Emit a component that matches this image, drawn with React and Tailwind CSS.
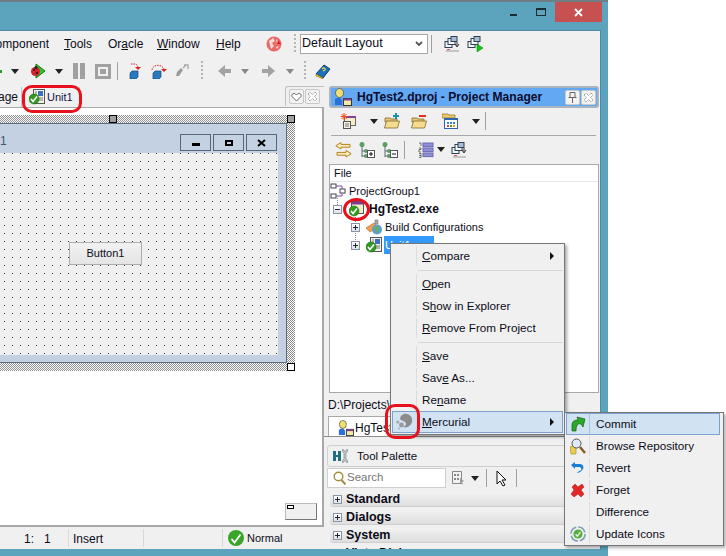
import React from "react";

const Check = ({ x = 0, y = 6, r = 5 }) => (
  <g>
    <circle cx={x + r} cy={y + r} r={r} fill="#2f9a1e" stroke="#1c6f14" strokeWidth="0.6" />
    <path d={`M${x + r - 3} ${y + r} l2 2.4 l4 -5`} fill="none" stroke="#fff" strokeWidth="1.6" />
  </g>
);

const Svg = ({ children, w = 16, h = 16, vb, className = "" }) => (
  <svg width={w} height={h} viewBox={vb || `0 0 ${w} ${h}`} className={`shrink-0 ${className}`}>{children}</svg>
);

const DD = ({ c = "#222", className = "" }) => (
  <Svg w={8} h={5} className={className}><path d="M0 0h8L4 5z" fill={c} /></Svg>
);

const Grip = ({ className = "" }) => (
  <div className={`w-[2px] h-[20px] shrink-0 bg-[repeating-linear-gradient(#b5b5b5_0_2px,transparent_2px_4px)] ${className}`} />
);

const VSep = ({ className = "" }) => <div className={`w-px h-[18px] shrink-0 bg-[#a0a0a0] ${className}`} />;

const UnitIcon = () => (
  <Svg>
    <rect x="4.5" y="0.5" width="11" height="14" fill="#f4f1e6" stroke="#555" />
    <rect x="9" y="2" width="5" height="5" fill="#3d6fc0" />
    <path d="M9 9h5M9 11h5M6 3h2M6 5h2" stroke="#777" />
    <Check x={0} y={5} />
  </Svg>
);

const ExeIcon = () => (
  <Svg>
    <rect x="2.5" y="0.5" width="12" height="12" fill="#f5ecc8" stroke="#555" />
    <rect x="2.5" y="0.5" width="12" height="3" fill="#7a3d90" />
    <Check x={0} y={5} />
  </Svg>
);

const Bug = () => (
  <Svg>
    <path d="M6 1l9 7-9 7z" fill="#2cc52c" stroke="#157a15" />
    <ellipse cx="5.5" cy="8.5" rx="4.5" ry="4.5" fill="#d6202a" />
    <circle cx="4" cy="7" r="1" fill="#111" /><circle cx="7" cy="10" r="1" fill="#111" /><circle cx="6" cy="4.5" r="1.6" fill="#222" />
  </Svg>
);

const Globe = () => (
  <Svg>
    <circle cx="8" cy="8" r="7.5" fill="#ea6a6a" />
    <path d="M3 5l4-3 2 3-3 2 2 3-3 3zM10 3l4 4-3 1zM10 11l3-1-2 3z" fill="#fbdada" />
    <path d="M12 4l3 4-4 0z" fill="#d62020" />
  </Svg>
);

const Cube = ({ x = 4, y = 7 }) => (
  <g>
    <path d={`M${x} ${y + 2}l2 -2h6v6l-2 2h-6z`} fill="#2a78bd" stroke="#164b80" strokeWidth="0.7" />
  </g>
);

const StepA = () => (
  <Svg>
    <path d="M3 1h3c3 0 4 2 4 4" fill="none" stroke="#e02020" strokeDasharray="1.5 1" />
    <path d="M7 4h6l-3 3z" fill="#e02020" />
    <Cube x={2} y={8} />
  </Svg>
);

const StepB = () => (
  <Svg>
    <path d="M1 7c0-5 9-7 12-1" fill="none" stroke="#e02020" strokeDasharray="1.5 1" />
    <path d="M10 6h6l-3 3z" fill="#e02020" />
    <Cube x={2} y={8} />
  </Svg>
);

const StepC = () => (
  <Svg>
    <path d="M3 9l4-4 2 2-4 6h-3z" fill="#9c9c9c" />
    <path d="M9 5l3-3M10 2h4v4" fill="none" stroke="#aaa" strokeWidth="1.4" />
  </Svg>
);

const Book = () => (
  <Svg>
    <path d="M1 11L9 2l6 4-7 9z" fill="#1b6fb8" stroke="#0d3c70" />
    <path d="M1 11l7 4 0 1-7-3z" fill="#f0c820" stroke="#7a6a10" strokeWidth="0.5" />
    <path d="M7 6c1-2 4-1 3 1l-2 1" fill="none" stroke="#f0e040" strokeWidth="1.1" />
  </Svg>
);

const Stack = ({ play }) => (
  <Svg>
    <rect x="1" y="5.5" width="7" height="6" fill="#eef3f8" stroke="#2f4050" />
    <rect x="4" y="2.5" width="7" height="6" fill="#f4f7fb" stroke="#2f4050" />
    <rect x="7" y="0.5" width="6" height="5" fill="#a4bdd6" stroke="#2f4050" />
    {play ? <path d="M10 8l6 4-6 4z" fill="#11c811" stroke="#0a7a0a" strokeWidth="0.5" /> : <>
      <path d="M13 6v4M11 8l2 3 2-3" fill="none" stroke="#333" />
      <path d="M2 14h13v2H2z" fill="#c4c4c4" /><path d="M3 13h3v1H3z" fill="#e05050" />
    </>}
  </Svg>
);

const NewItem = () => (
  <Svg>
    <rect x="4.5" y="3.5" width="11" height="9" fill="#f5ecc8" stroke="#666" />
    <rect x="6" y="3" width="9" height="2" fill="#80409a" />
    <rect x="3.5" y="8.5" width="7" height="7" fill="#f4f1e6" stroke="#555" />
    <path d="M5 11h4M5 13h4" stroke="#777" />
    <path d="M4 0v7M0.5 3.5h7M1.5 1l5 5M6.5 1l-5 5" stroke="#f04a10" />
  </Svg>
);

const Folder = ({ add, red }) => (
  <Svg>
    <path d="M1 5h5l1 1h6v3H1z" fill="#e8c670" stroke="#7d6a30" strokeWidth="0.8" />
    <path d="M0.5 15l2-7h13l-2 7z" fill="#f6dc8c" stroke="#7d6a30" strokeWidth="0.8" />
    {add && <path d="M12 0v6M9 3h6" stroke="#1a8fb0" strokeWidth="2" />}
    {red && <path d="M8 2h7v2H8z" fill="#e03020" />}
  </Svg>
);

const Cal = () => (
  <Svg>
    <path d="M0 1h6l1 1h6v3H0z" fill="#edc86a" stroke="#87702a" strokeWidth="0.7" />
    <rect x="2.5" y="5.5" width="13" height="10" fill="#fff" stroke="#2b66b0" />
    <rect x="3" y="5" width="12" height="2" fill="#2b66b0" />
    <path d="M5 9h2v2H5zM8 9h2v2H8zM11 9h2v2h-2z" fill="#3a7fd0" />
    <path d="M5 12h2v2H5z" fill="#d04040" /><path d="M8 12h2v2H8z" fill="#40a040" /><path d="M11 12h2v2h-2z" fill="#e0a020" />
  </Svg>
);

const SwapArrows = () => (
  <Svg w={17} h={16}>
    <path d="M6 .5L.8 3.8 6 7V5.2h9V2.4H6zM11 8.5l5.2 3.2L11 15v-1.8H2v-2.8h9z" fill="#fbeebc" stroke="#b8801c" />
  </Svg>
);

const TreeBtn = ({ plus }) => (
  <Svg>
    <circle cx="3" cy="2.5" r="2.5" fill="#5aa060" />
    <circle cx="7" cy="9" r="2" fill="#5aa060" />
    <circle cx="7" cy="14" r="2" fill="#5aa060" />
    <path d="M3 4v11M3 9h3M3 14h3" stroke="#667" fill="none" />
    <rect x="8.5" y="8.5" width="7" height="7" fill="#fff" stroke="#555" />
    <path d="M10 12h4" stroke="#111" />
    {plus && <path d="M12 10v4" stroke="#111" />}
  </Svg>
);

const ListNum = () => (
  <Svg>
    <path d="M1 1h2v3M1 6h2v1.5H1V10h2M1 11.5h2v4H1M1 13.5h2" fill="none" stroke="#555" strokeWidth="0.8" />
    <rect x="5" y="1" width="10" height="3.6" fill="#8f8fd8" stroke="#6a6ab0" />
    <rect x="5" y="6" width="10" height="3.6" fill="#8f8fd8" stroke="#6a6ab0" />
    <rect x="5" y="11" width="10" height="3.6" fill="#8f8fd8" stroke="#6a6ab0" />
  </Svg>
);

const GroupIcon = () => (
  <Svg>
    <rect x="1" y="1" width="5" height="4" fill="#fff" stroke="#445" />
    <rect x="10" y="6" width="5" height="4" fill="#fff" stroke="#445" />
    <rect x="1" y="11" width="5" height="4" fill="#fff" stroke="#445" />
    <path d="M6 3h6v3M6 13h6v-3" fill="none" stroke="#7a4a9a" />
  </Svg>
);

const BuildIcon = () => (
  <Svg>
    <path d="M0 9l8-5 3 4-7 5z" fill="#f0a050" stroke="#b06020" strokeWidth="0.6" />
    <circle cx="11" cy="10.5" r="5" fill="#5a9fd0" />
    <path d="M8 8l4-1 1 4-3 3z" fill="#64b060" />
    <path d="M9 1h3v4H9z" fill="#aaa" stroke="#777" strokeWidth="0.6" />
  </Svg>
);

const PersonIcon = ({ size = 18 }) => (
  <Svg w={size} h={size} vb="0 0 18 18">
    <path d="M1 17v-6l4-2 3 3v5z" fill="#2a70d8" />
    <ellipse cx="5.5" cy="5" rx="4" ry="4.5" fill="#f0e070" stroke="#555" strokeWidth="0.8" />
    <rect x="9.5" y="10.5" width="8" height="7" fill="#f5e8a0" stroke="#333" />
    <rect x="9.5" y="10.5" width="8" height="2" fill="#7a3d90" />
  </Svg>
);

const Expander = ({ minus }) => (
  <div className="w-[9px] h-[9px] shrink-0 border border-[#8a96a8] bg-[linear-gradient(#fff,#dde0e6)] flex items-center justify-center relative">
    <div className="w-[5px] h-px bg-[#223]" />
    {!minus && <div className="absolute w-px h-[5px] bg-[#223]" />}
  </div>
);

const Hg = () => (
  <Svg w={18} h={18}>
    <path d="M8 1c5-1 9 3 8 8-1 4-5 6-9 5 3-1 4-3 2-5S5 8 4 6c0-3 2-4 4-5z" fill="#8b8b8b" />
    <circle cx="5.5" cy="12" r="2.4" fill="#9b9b9b" />
    <circle cx="1.8" cy="9" r="1.5" fill="#a8a8a8" />
    <circle cx="3" cy="15.5" r="0.9" fill="#aaa" />
  </Svg>
);

const CommitI = () => (
  <Svg>
    <path d="M2 15V9c0-4 3-5 6-5L7 1l8 2-2 8-2-3C8 7 6 9 6 15z" fill="#2ba82b" stroke="#126012" strokeWidth="0.7" />
  </Svg>
);
const BrowseI = () => (
  <Svg w={16} h={17}>
    <path d="M0 9l3-1h3v8H1z" fill="#f0cc50" stroke="#9a8020" strokeWidth="0.6" />
    <circle cx="6.5" cy="5.5" r="4.5" fill="#dfeafa" stroke="#555" />
    <path d="M10 9l5 6" stroke="#8a5a20" strokeWidth="2.4" />
  </Svg>
);
const RevertI = () => (
  <Svg>
    <path d="M1 5l4-3v2h5c3 0 4 3 3 5s-4 4-6 4l2-2c2 0 3-2 2-3s-1-1-2-1H5v2z" fill="#1b7fd6" />
  </Svg>
);
const ForgetI = () => (
  <Svg>
    <path d="M2 5l3-3 3 3 4-3 2 3-3 3 3 4-3 3-3-3-4 3-3-3 3-4z" fill="#e02828" stroke="#b01010" strokeWidth="0.5" />
  </Svg>
);
const UpdateI = () => (
  <Svg>
    <circle cx="8" cy="8" r="7" fill="none" stroke="#7aa0b0" strokeWidth="1.6" strokeDasharray="9 2" />
    <circle cx="8" cy="8" r="4.6" fill="#58ad45" />
    <path d="M5.6 8.2l1.8 2 3-4" fill="none" stroke="#e6f5e0" strokeWidth="1.3" />
  </Svg>
);

const MenuRow = ({ children, arrow, hot, icon }) => (
  <div className={`h-[22px] flex items-center border ${hot ? "bg-[#d1e2f2] border-[#7da2ce]" : "border-transparent"}`}>
    <div className="w-[24px] h-full shrink-0 border-r border-[#dcdcdc] flex items-center justify-center">{icon}</div>
    <span className="ml-[5px] flex-1 whitespace-nowrap">{children}</span>
    {arrow && <div className="mr-[8px] w-0 h-0 border-y-[4px] border-y-transparent border-l-[4px] border-l-[#111]" />}
  </div>
);

const MenuSep = () => (
  <div className="h-[6px] flex items-center pl-[26px]"><div className="h-px w-full bg-[#d4d4d4]" /></div>
);

const SubRow = ({ children, hot, icon }) => (
  <div className={`h-[22px] flex items-center border ${hot ? "bg-[#d1e2f2] border-[#7da2ce]" : "border-transparent"}`}>
    <div className={`w-[23px] h-full shrink-0 border-r flex items-center justify-center ${hot ? "border-[#a9c3df]" : "border-[#dcdcdc]"}`}>{icon}</div>
    <span className="ml-[6px] whitespace-nowrap">{children}</span>
  </div>
);

const Category = ({ children }) => (
  <div className="h-[15px] mb-[3px] ml-[6px] rounded-[3px] border-b border-[#cfcfcf] bg-[linear-gradient(#f2f2f2,#dedede)] flex items-center pl-[3px] font-bold text-[12.5px]">
    <Expander />
    <span className="ml-[4px]">{children}</span>
  </div>
);

const TitleBtn = ({ children }) => (
  <div className="w-[15px] h-[15px] rounded-[2px] border border-[#c8c8c8] bg-[#f2f2f2] flex items-center justify-center shrink-0">{children}</div>
);

const PinGlyph = () => (
  <Svg w={9} h={11}><path d="M2 .5h5v5H2zM.5 5.5h8M4.5 6v5" fill="none" stroke="#666" /></Svg>
);
const CloseGlyph = () => (
  <Svg w={11} h={11}><path d="M1 3l2-2 2.5 2.5L8 1l2 2-2.5 2.5L10 8l-2 2-2.5-2.5L3 10 1 8l2.5-2.5z" fill="#fff" stroke="#888" strokeWidth="0.8" strokeDasharray="1.4 .6" /></Svg>
);
const HeartGlyph = () => (
  <Svg w={11} h={10}><path d="M5.5 9L1 4.5C0 2 3.5 0 5.5 3 7.5 0 11 2 10 4.5z" fill="#fff" stroke="#666" /></Svg>
);

const FormBtn = ({ children }) => (
  <div className="w-[31px] h-[17px] border border-[#56677c] bg-[#c3d1e2] flex items-center justify-center">{children}</div>
);

const Handle = ({ className }) => <div className={`absolute w-[8px] h-[8px] border border-black ${className}`} />;

export default function App() {
  return (
    <div className="relative w-[726px] h-[556px] bg-white overflow-hidden font-['Liberation_Sans',sans-serif] text-[12px] text-[#0c0c18]">
      <div className="w-[608px] h-[556px] bg-[#5ca3bd] border-t-2 border-[#6f7d85] flex flex-col">
        {/* caption */}
        <div className="h-[28px] shrink-0 flex items-start justify-end pr-[6px]">
          <div className="w-[7px] h-[2px] bg-[#1c2c34] mt-[12px] mr-[19px]" />
          <div className="w-[10px] h-[8px] border border-t-2 border-[#1c2c34] mt-[6px] mr-[9px]" />
          <div className="w-[47px] h-[20px] bg-[#c75050] flex items-center justify-center">
            <Svg w={9} h={9}><path d="M1 1l7 7M8 1L1 8" stroke="#fff" strokeWidth="1.8" /></Svg>
          </div>
        </div>

        {/* client */}
        <div className="w-[601px] h-[519px] shrink-0 bg-[#f0f0f0] border-t border-r border-[#4d8aa3] flex flex-col overflow-hidden">
          {/* menu row */}
          <div className="h-[25px] shrink-0 flex items-center">
            <div className="w-[64px] shrink-0 pt-px"><div className="w-[49px] flex justify-end overflow-hidden whitespace-nowrap"><span className="shrink-0">Component</span></div></div>
            <span className="w-[44px] shrink-0 pt-px"><u>T</u>ools</span>
            <span className="w-[49px] shrink-0 pt-px">Or<u>a</u>cle</span>
            <span className="w-[59px] shrink-0 pt-px"><u>W</u>indow</span>
            <span className="w-[50px] shrink-0 pt-px"><u>H</u>elp</span>
            <Globe />
            <Grip className="ml-[12px]" />
            <div className="ml-[4px] w-[128px] h-[20px] shrink-0 bg-white border border-[#a8a8a8] flex items-center pl-[1px]">
              <span className="flex-1 text-[12.5px]">Default Layout</span>
              <Svg w={8} h={6} className="mr-[4px]"><path d="M1 1l3 3 3-3" fill="none" stroke="#555" strokeWidth="1.8" /></Svg>
            </div>
            <VSep className="ml-[3px]" />
            <div className="ml-[12px]"><Stack /></div>
            <div className="ml-[7px]"><Stack play /></div>
          </div>

          {/* toolbar row */}
          <div className="h-[28px] shrink-0 mt-[1px] flex items-center">
            <div className="w-[2px] h-[3px] bg-[#22a022] shrink-0" />
            <DD className="ml-[9px]" />
            <div className="ml-[11px]"><Bug /></div>
            <DD className="ml-[9px]" />
            <div className="ml-[10px] w-[12px] h-[16px] shrink-0 flex justify-between">
              <div className="w-[5px] h-full bg-[#a0a0a0]" /><div className="w-[5px] h-full bg-[#a0a0a0]" />
            </div>
            <div className="ml-[10px] w-[16px] h-[15px] shrink-0 border-[3px] border-[#a0a0a0] p-[2px]"><div className="w-full h-full bg-[#a0a0a0]" /></div>
            <VSep className="ml-[6px]" />
            <div className="ml-[10px]"><StepA /></div>
            <div className="ml-[7px]"><StepB /></div>
            <div className="ml-[7px]"><StepC /></div>
            <Grip className="ml-[11px]" />
            <div className="ml-[14px]"><Svg><path d="M1 8l7-6v4h6v4H8v4z" fill="#a3a3a3" /></Svg></div>
            <DD c="#888" className="ml-[8px]" />
            <div className="ml-[11px]"><Svg><path d="M15 8L8 2v4H2v4h6v4z" fill="#a3a3a3" /></Svg></div>
            <DD c="#888" className="ml-[10px]" />
            <Grip className="ml-[10px]" />
            <div className="ml-[9px]"><Book /></div>
          </div>

          {/* main */}
          <div className="flex-1 flex min-h-0">
            {/* left column */}
            <div className="w-[324px] shrink-0 flex flex-col">
              <div className="h-[23px] shrink-0 border-b border-[#a8a8a8] flex items-end relative">
                <div className="w-[22px] h-[20px] overflow-hidden flex justify-end items-center border-r border-[#c8c8c8] shrink-0"><span className="shrink-0 pr-[3px]">Page</span></div>
                <div className="ml-[2px] w-[56px] h-[20px] flex items-center pl-[5px] shrink-0 bg-[#f0f0f0] border-r border-[#c8c8c8]">
                  <UnitIcon />
                  <span className="ml-[2px] pt-px text-[11px] text-[#14144a]">Unit1</span>
                </div>
                <div className="ml-auto mb-[1px] w-[39px] h-[20px] border border-b-0 border-r-0 rounded-tl-[3px] border-[#c0c0c0] flex items-center gap-[1px] pl-[3px]">
                  <TitleBtn><HeartGlyph /></TitleBtn>
                  <TitleBtn><CloseGlyph /></TitleBtn>
                </div>
              </div>

              <div className="flex-1 min-h-0 bg-white border-r-2 border-b-2 border-[#a8a8a8] flex flex-col pt-[7px]">
                <div className="relative w-[295px] h-[256px] shrink-0 py-[8px] pr-[8px] bg-[repeating-conic-gradient(#8c8c8c_0_25%,#fff_0_50%)] bg-[size:2px_2px]">
                  <Handle className="left-[109px] top-0 bg-[#a0a0a0]" />
                  <Handle className="right-0 top-0 bg-[#a0a0a0]" />
                  <Handle className="right-0 bottom-0 bg-white" />
                  <div className="w-[287px] h-[240px] bg-[#c3d1e2] border-y border-r border-[#5d6d7c] flex flex-col">
                    <div className="h-[29px] shrink-0 flex items-end pb-[2px] justify-between pr-[9px]">
                      <span className="mb-[1px] text-[#44556a]">1</span>
                      <div className="flex gap-[2px]">
                        <FormBtn><div className="w-[8px] h-[3px] bg-black mt-[4px]" /></FormBtn>
                        <FormBtn><div className="w-[8px] h-[6px] border-2 border-black" /></FormBtn>
                        <FormBtn><Svg w={9} h={8}><path d="M1 1l7 6M8 1L1 7" stroke="#000" strokeWidth="2" /></Svg></FormBtn>
                      </div>
                    </div>
                    <div className="w-[278px] h-[202px] bg-[#f0f0f0] bg-[radial-gradient(circle_at_4.5px_0.5px,#3a3020_0.55px,transparent_0.6px)] bg-[size:8px_8px] pl-[69px] pt-[89px]">
                      <div className="w-[73px] h-[23px] border border-[#adadad] bg-[linear-gradient(#f2f2f2,#e4e4e4)] flex items-center justify-center text-[11px]">Button1</div>
                    </div>
                  </div>
                </div>
                <div className="mt-auto mb-[5px] mr-[5px] self-end w-[32px] h-[17px] bg-[#f0f0f0] border-r border-b border-[#777] border-t border-t-[#bbb] border-l border-l-[#bbb] p-px">
                  <div className="w-[7px] h-[4px] bg-white border border-black" />
                </div>
              </div>

              <div className="h-[22px] shrink-0 flex items-center">
                <div className="w-[69px] h-[18px] border-r border-[#d8d8d8] flex items-center pl-[24px] pt-px shrink-0 whitespace-pre">1:   1</div>
                <div className="w-[75px] h-[18px] border-r border-[#d8d8d8] flex items-center pl-[4px] pt-px shrink-0">Insert</div>
                <div className="w-[79px] h-[18px] border-r border-[#d8d8d8] shrink-0" />
                <div className="ml-[5px] shrink-0">
                  <Svg>
                    <circle cx="8" cy="8" r="8" fill="#3aa52a" />
                    <path d="M3.5 9l3 3.5 6-8" fill="none" stroke="#fff" strokeWidth="1.8" />
                  </Svg>
                </div>
                <span className="ml-[3px] pt-px text-[11px]">Normal</span>
              </div>
            </div>

            {/* right column */}
            <div className="flex-1 min-w-0 flex flex-col">
              <div className="ml-[5px] mt-[1px] w-[270px] h-[22px] shrink-0 rounded-[3px] bg-[#62a8f2] border-2 border-[#a9b4c0] flex items-center pl-[3px] pr-[1px]">
                <PersonIcon />
                <span className="ml-[5px] font-bold whitespace-nowrap flex-1 text-[12.1px] text-[#0c0c30]">HgTest2.dproj - Project Manager</span>
                <div className="flex gap-[1px]">
                  <TitleBtn><PinGlyph /></TitleBtn>
                  <TitleBtn><CloseGlyph /></TitleBtn>
                </div>
              </div>

              <div className="h-[26px] shrink-0 flex items-center">
                <div className="ml-[16px]"><NewItem /></div>
                <DD className="ml-[14px]" />
                <div className="ml-[6px]"><Folder add /></div>
                <div className="ml-[11px]"><Folder red /></div>
                <div className="ml-[15px]"><Cal /></div>
                <DD className="ml-[14px]" />
                <VSep className="ml-[5px]" />
              </div>

              <div className="ml-[7px] mt-[1px] w-[265px] h-px shrink-0 bg-[#a8a8a8]" />

              <div className="h-[27px] shrink-0 flex items-center">
                <div className="ml-[11px]"><SwapArrows /></div>
                <div className="ml-[7px]"><TreeBtn plus /></div>
                <div className="ml-[7px]"><TreeBtn /></div>
                <VSep className="ml-[6px]" />
                <div className="ml-[13px]"><ListNum /></div>
                <DD className="ml-[3px]" />
                <div className="ml-[6px]"><Stack /></div>
              </div>

              <div className="relative ml-[5px] mt-px w-[270px] h-[229px] shrink-0 bg-white border border-[#a8a8a8] overflow-hidden text-[11px]">
                <div className="h-[17px] border-b border-[#e2e8ee] flex items-center pl-[4px] pt-px">File</div>
                <div className="h-[18px] flex items-center"><GroupIcon /><span className="ml-[3px]">ProjectGroup1</span></div>
                <div className="h-[18px] flex items-center pl-[3px]">
                  <Expander minus />
                  <div className="ml-[7px]"><ExeIcon /></div>
                  <span className="ml-[4px] font-bold text-[12px]">HgTest2.exe</span>
                </div>
                <div className="h-[18px] flex items-center pl-[21px]">
                  <Expander />
                  <div className="ml-[6px]"><BuildIcon /></div>
                  <span className="ml-[3px]">Build Configurations</span>
                </div>
                <div className="h-[18px] flex items-center pl-[21px]">
                  <Expander />
                  <div className="ml-[6px]"><UnitIcon /></div>
                  <span className="ml-[2px] w-[50px] h-[18px] bg-[#3399ff] text-white flex items-center pl-[1px]">Unit1</span>
                </div>
                {/* dotted tree connectors */}
                <div className="absolute left-[7px] top-[33px] h-[7px] border-l border-dotted border-[#888]" />
                <div className="absolute left-[25px] top-[52px] h-[7px] border-l border-dotted border-[#888]" />
                <div className="absolute left-[25px] top-[68px] h-[9px] border-l border-dotted border-[#888]" />
              </div>

              <div className="h-[22px] shrink-0 flex items-center pl-[4px] pt-[2px] whitespace-nowrap overflow-hidden">D:\Projects\D</div>

              <div className="h-[22px] shrink-0 border-b border-[#8c8c8c] flex items-end pl-[4px]">
                <div className="w-[66px] h-[20px] bg-white border-x border-t border-[#a8a8a8] flex items-center pl-[9px] pt-[2px] overflow-hidden">
                  <PersonIcon size={16} />
                  <span className="ml-px shrink-0">HgTest</span>
                </div>
              </div>

              <div className="ml-[3px] mt-[8px] h-[22px] shrink-0 border border-[#cfcfcf] rounded-[3px] flex items-center pl-[5px]">
                <Svg>
                  <path d="M0 3h3v10H0zM5 3h3v10H5zM3 7h2v2H3z" fill="#1f6f86" />
                  <path d="M10 1l1 2h2l1-2c1 1 1 3-1 4v6c2 1 2 3 1 4l-1-2h-2l-1 2c-1-1-1-3 1-4V5c-2-1-2-3-1-4z" fill="#c4c4c4" stroke="#777" strokeWidth="0.5" />
                </Svg>
                <span className="ml-[8px] pt-px text-[11.5px]">Tool Palette</span>
              </div>

              <div className="mt-px h-[20px] shrink-0 flex items-center">
                <div className="ml-[3px] w-[119px] h-[20px] bg-white border border-[#cfcfcf] flex items-center pl-[5px] shrink-0">
                  <Svg w={13} h={14}>
                    <circle cx="5.5" cy="5.5" r="4.3" fill="none" stroke="#a08c3c" strokeWidth="1.4" />
                    <path d="M8.5 9l4 4.5" stroke="#a08c3c" strokeWidth="2" />
                  </Svg>
                  <span className="ml-px text-[11.5px] text-[#777]">Search</span>
                </div>
                <div className="ml-[5px]">
                  <Svg w={14} h={14}><path d="M1.5.5h9v12h-9z" fill="#f2f2f2" stroke="#888" /><path d="M3 3h2v2H3zM6 3h2v2H6zM3 7h2v2H3zM6 7h2v2H6z" fill="#8a8a8a" /><path d="M9 7l4 3-2 1 1 2-1 .5-1-2-1 1z" fill="#999" /></Svg>
                </div>
                <DD className="ml-[6px]" />
                <VSep className="ml-[7px]" />
                <div className="ml-[9px]">
                  <Svg w={12} h={17}><path d="M1 1v13l3-3 3 5 2-1-3-5h4z" fill="#fff" stroke="#111" /></Svg>
                </div>
                <VSep className="ml-[8px]" />
              </div>

              <div className="mt-[4px] flex-1 min-h-0 overflow-hidden">
                <Category>Standard</Category>
                <Category>Dialogs</Category>
                <Category>System</Category>
                <Category>Vista Dialogs</Category>
              </div>
            </div>
          </div>
        </div>
      </div>

      {/* context menu */}
      <div className="absolute left-[390px] top-[243px] w-[175px] bg-[#f0f0f0] border border-[#767676] p-px text-[11.7px] shadow-[2px_2px_3px_rgba(0,0,0,0.35)]">
        <MenuRow arrow><u>C</u>ompare</MenuRow>
        <MenuSep />
        <MenuRow><u>O</u>pen</MenuRow>
        <MenuRow>S<u>h</u>ow in Explorer</MenuRow>
        <MenuRow><u>R</u>emove From Project</MenuRow>
        <MenuSep />
        <MenuRow><u>S</u>ave</MenuRow>
        <MenuRow>Sav<u>e</u> As...</MenuRow>
        <MenuRow>Re<u>n</u>ame</MenuRow>
        <MenuRow arrow hot icon={<Hg />}><u>M</u>ercurial</MenuRow>
      </div>

      {/* submenu */}
      <div className="absolute left-[564px] top-[412px] w-[160px] bg-[#f0f0f0] border border-[#767676] pl-px pr-[3px] text-[11.7px] shadow-[2px_2px_3px_rgba(0,0,0,0.3)]">
        <SubRow hot icon={<CommitI />}>Commit</SubRow>
        <SubRow icon={<BrowseI />}>Browse Repository</SubRow>
        <SubRow icon={<RevertI />}>Revert</SubRow>
        <SubRow icon={<ForgetI />}>Forget</SubRow>
        <SubRow>Difference</SubRow>
        <SubRow icon={<UpdateI />}>Update Icons</SubRow>
      </div>

      {/* red annotation rings */}
      <div className="absolute left-[22px] top-[85px] w-[60px] h-[28px] rounded-[10px] border-[3px] border-[#e8101c]" />
      <div className="absolute left-[343px] top-[198px] w-[27px] h-[23px] rounded-[50%] border-[3px] border-[#e8101c]" />
      <div className="absolute left-[385px] top-[404px] w-[35px] h-[35px] rounded-[10px] border-[3px] border-[#e8101c]" />
    </div>
  );
}
